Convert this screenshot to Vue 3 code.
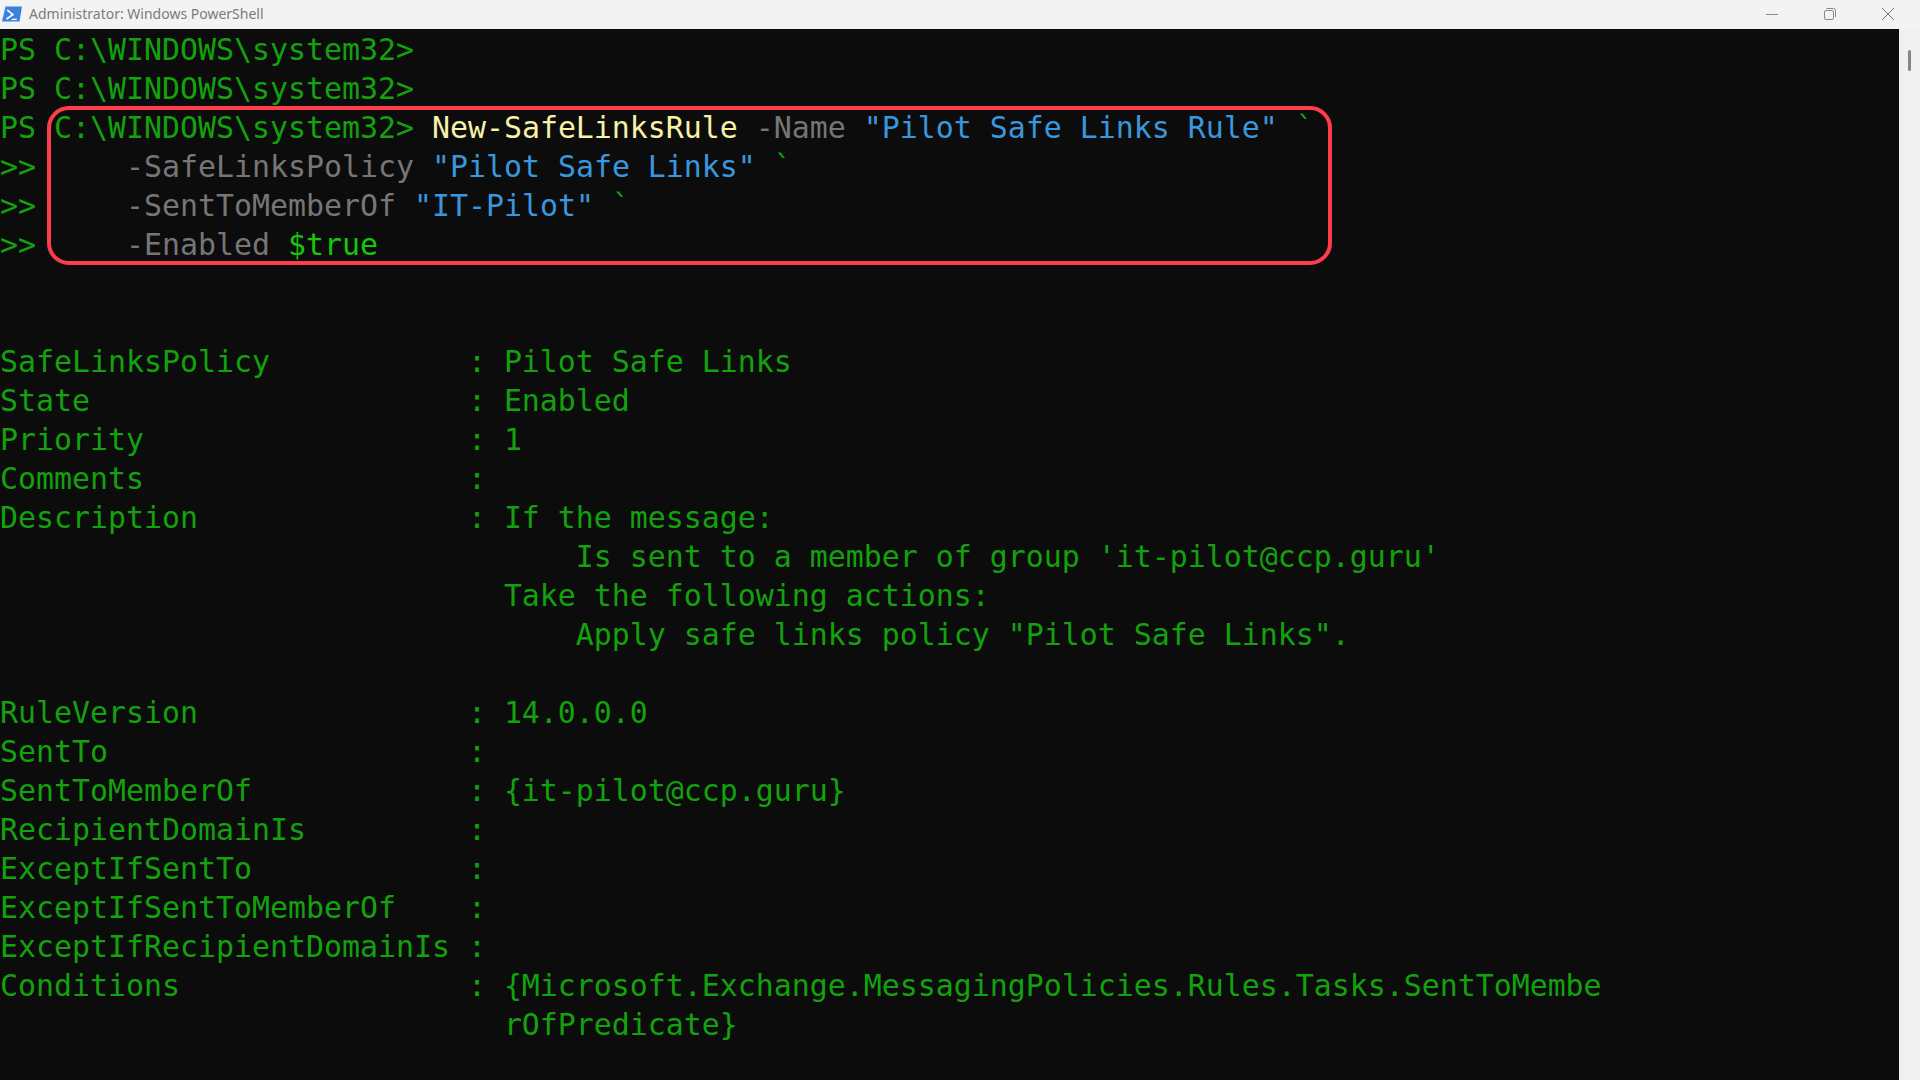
<script setup>
const field = (name, value = '') => [['g', name.padEnd(26) + ': ' + value]]
const g = (t) => [['g', t]]
const lines = [
  g('PS C:\\WINDOWS\\system32>'),
  g('PS C:\\WINDOWS\\system32>'),
  [['g', 'PS C:\\WINDOWS\\system32> '], ['y', 'New-SafeLinksRule'], ['m', ' -Name '], ['b', '"Pilot Safe Links Rule"'], ['g', ' `']],
  [['g', '>>     '], ['m', '-SafeLinksPolicy '], ['b', '"Pilot Safe Links"'], ['g', ' `']],
  [['g', '>>     '], ['m', '-SentToMemberOf '], ['b', '"IT-Pilot"'], ['g', ' `']],
  [['g', '>>     '], ['m', '-Enabled '], ['t', '$true']],
  g(' '),
  g(' '),
  field('SafeLinksPolicy', 'Pilot Safe Links'),
  field('State', 'Enabled'),
  field('Priority', '1'),
  field('Comments'),
  field('Description', 'If the message:'),
  g(' '.repeat(32) + "Is sent to a member of group 'it-pilot@ccp.guru'"),
  g(' '.repeat(28) + 'Take the following actions:'),
  g(' '.repeat(32) + 'Apply safe links policy "Pilot Safe Links".'),
  g(' '),
  field('RuleVersion', '14.0.0.0'),
  field('SentTo'),
  field('SentToMemberOf', '{it-pilot@ccp.guru}'),
  field('RecipientDomainIs'),
  field('ExceptIfSentTo'),
  field('ExceptIfSentToMemberOf'),
  field('ExceptIfRecipientDomainIs'),
  field('Conditions', '{Microsoft.Exchange.MessagingPolicies.Rules.Tasks.SentToMembe'),
  g(' '.repeat(28) + 'rOfPredicate}'),
]
</script>

<template>
  <div class="window">
    <header class="titlebar">
      <svg class="logo" width="20" height="16" viewBox="0 0 20 16">
        <path d="M3.5 0.5H20L17.5 15.5H0Z" fill="#3b82dc" />
        <path d="M5.2 3.8L10.8 8.6L4.6 13" fill="none" stroke="#fff" stroke-width="1.7" />
        <path d="M9.7 13.4H14.7" stroke="#fff" stroke-width="1.4" />
      </svg>
      <span class="title">Administrator: Windows PowerShell</span>
      <div class="controls">
        <svg width="12" height="12" viewBox="0 0 12 12"><path d="M0 6.5H12" stroke="#8a8a8a" stroke-width="1" /></svg>
        <svg width="12" height="12" viewBox="0 0 12 12" fill="none" stroke="#8a8a8a" stroke-width="1">
          <rect x="0.5" y="2.5" width="9" height="9" rx="1.5" />
          <path d="M2.5 0.5H9.5A2 2 0 0 1 11.5 2.5V9" />
        </svg>
        <svg width="12" height="12" viewBox="0 0 12 12"><path d="M0 0L12 12M12 0L0 12" stroke="#7a7a7a" stroke-width="1" /></svg>
      </div>
    </header>
    <div class="body">
      <main class="console">
        <div v-for="(line, i) in lines" :key="i" class="row">
          <span v-for="(seg, j) in line" :key="j" :class="seg[0]">{{ seg[1] }}</span>
        </div>
        <div class="highlight"></div>
      </main>
      <aside class="scrollbar"><div class="thumb"></div></aside>
    </div>
  </div>
</template>

<style>
html, body { margin: 0; background: #0c0c0c; overflow: hidden; }
</style>

<style scoped>
.window {
  width: 1920px;
  height: 1080px;
  display: flex;
  flex-direction: column;
  overflow: hidden;
}
.titlebar {
  height: 29px;
  flex: none;
  display: flex;
  align-items: center;
  background: #f3f3f3;
  padding: 0 26px 2px 2px;
  box-sizing: border-box;
}
.logo { flex: none; margin-top: 1px; }
.title {
  margin-left: 7px;
  font-family: "Noto Sans", sans-serif;
  font-size: 14px;
  color: #7b7b7b;
}
.controls {
  margin-left: auto;
  display: flex;
  gap: 46px;
  align-items: center;
}
.controls svg { display: block; }
.body {
  flex: 1;
  display: flex;
  min-height: 0;
}
.console {
  position: relative;
  flex: 1;
  background: #0c0c0c;
  padding-top: 1px;
  font-family: "DejaVu Sans Mono", monospace;
  font-size: 29.9px;
  white-space: pre;
  overflow: hidden;
}
.row {
  height: 39px;
  line-height: 39px;
}
.g { color: #13a10e; }
.y { color: #f9f1a5; }
.m { color: #767676; }
.b { color: #3a96dd; }
.t { color: #16c60c; }
.highlight {
  position: absolute;
  left: 47px;
  top: 77px;
  width: 1285px;
  height: 159px;
  box-sizing: border-box;
  border: 4px solid #fd3d49;
  border-radius: 22px;
}
.scrollbar {
  width: 21px;
  flex: none;
  background: #f0f0f0;
  position: relative;
}
.thumb {
  position: absolute;
  left: 9px;
  top: 21px;
  width: 3px;
  height: 21px;
  border-radius: 2px;
  background: #858585;
}
</style>
